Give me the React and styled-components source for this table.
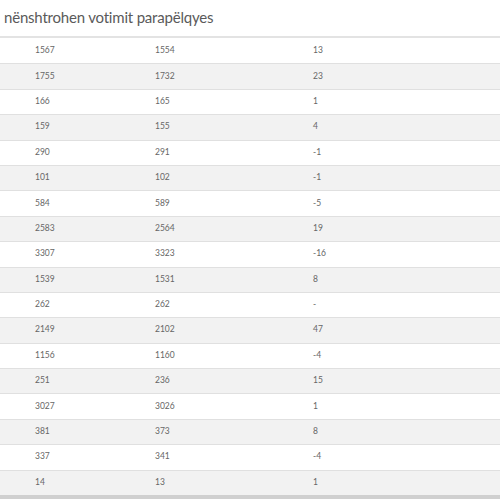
import React from 'react';
import styled, { createGlobalStyle } from 'styled-components';

const GlobalStyle = createGlobalStyle`
  body {
    margin: 0;
    background: #fff;
    font-family: Lato, "Open Sans", sans-serif;
  }
`;

const Page = styled.div`
  width: 500px;
  height: 500px;
  overflow: hidden;
`;

const Title = styled.h3`
  margin: 0;
  padding: 8px 0 0 4px;
  height: 36px;
  box-sizing: border-box;
  font-size: 15px;
  font-weight: 400;
  color: #5a5a5a;
  letter-spacing: -0.2px;
`;

const Table = styled.div`
  border-top: 2px solid #e3e3e3;
  border-bottom: 4px solid #d0d0d0;
`;

const Row = styled.div`
  display: grid;
  grid-template-columns: 120px 158px 1fr;
  align-items: center;
  height: 25.4px;
  box-sizing: border-box;
  padding-left: 35px;
  background: ${p => (p.$striped ? '#f2f2f2' : '#fff')};
  border-top: ${p => (p.$first ? 'none' : '1px solid #e0e0e0')};
  font-size: 8.5px;
  color: #666;
`;

const Cell = styled.span`
  padding-bottom: 2px;
`;

const rows = [
  [1567, 1554, 13],
  [1755, 1732, 23],
  [166, 165, 1],
  [159, 155, 4],
  [290, 291, -1],
  [101, 102, -1],
  [584, 589, -5],
  [2583, 2564, 19],
  [3307, 3323, -16],
  [1539, 1531, 8],
  [262, 262, '-'],
  [2149, 2102, 47],
  [1156, 1160, -4],
  [251, 236, 15],
  [3027, 3026, 1],
  [381, 373, 8],
  [337, 341, -4],
  [14, 13, 1],
];

const App = () => (
  <Page>
    <GlobalStyle />
    <Title>nënshtrohen votimit parapëlqyes</Title>
    <Table>
      {rows.map((r, i) => (
        <Row key={i} $striped={i % 2 === 1} $first={i === 0}>
          <Cell>{r[0]}</Cell>
          <Cell>{r[1]}</Cell>
          <Cell>{r[2]}</Cell>
        </Row>
      ))}
    </Table>
  </Page>
);

export default App;
